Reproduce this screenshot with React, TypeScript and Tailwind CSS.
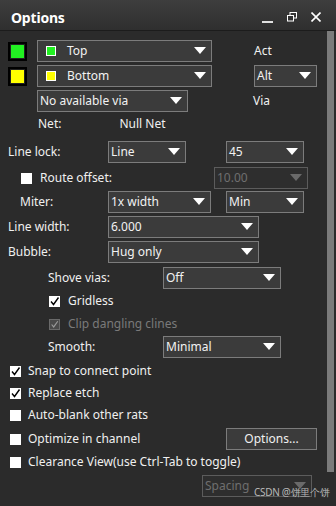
import React from "react";

const font = { fontFamily: '"Noto Sans", "Open Sans", Arial, sans-serif' };

const Arrow = ({ disabled = false }: { disabled?: boolean }) => (
  <svg width="12" height="8" viewBox="0 0 12 8" className="shrink-0">
    <path d="M0 0 L12 0 L6 7 Z" fill={disabled ? "#6a6a6a" : "#ffffff"} />
  </svg>
);

const Select = ({
  label,
  w,
  disabled = false,
  swatch,
}: {
  label: string;
  w: string;
  disabled?: boolean;
  swatch?: string;
}) => (
  <div
    className={`${w} h-[22px] flex items-center justify-between pl-[2px] pr-[5px] border ${
      disabled ? "border-[#5c5c5c] text-[#6e6e6e] bg-[#2e2e2e]" : "border-[#7c7c7c] bg-[#3b3b3b] text-[#f2f2f2]"
    }`}
  >
    <div className="flex items-center">
      {swatch && (
        <div className="w-[10px] h-[10px] border border-white ml-[6px] mr-[11px]" style={{ background: swatch }} />
      )}
      <span>{label}</span>
    </div>
    <Arrow disabled={disabled} />
  </div>
);

const Check = ({ checked = false, disabled = false }: { checked?: boolean; disabled?: boolean }) => (
  <div
    className={`w-[11px] h-[11px] shrink-0 flex items-center justify-center ${
      disabled ? "bg-[#4a4a4a] border border-[#6a6a6a]" : "bg-white"
    }`}
  >
    {checked && (
      <svg width="11" height="11" viewBox="0 0 11 11">
        <path
          d="M2 5.5 L4.5 8.5 L9.5 1.5"
          stroke={disabled ? "#9a9a9a" : "#000"}
          strokeWidth="1.4"
          fill="none"
        />
      </svg>
    )}
  </div>
);

const Swatch = ({ color }: { color: string }) => (
  <div className="w-[19px] h-[19px] border-[2px] border-black bg-[#222] p-px ml-[8px] mr-[10px]">
    <div className="w-full h-full" style={{ background: color }} />
  </div>
);

export default function App() {
  return (
    <div className="w-[336px] h-[506px] bg-[#2b2b2b] text-[12px] text-[#f0f0f0] overflow-hidden flex flex-col" style={font}>
      {/* title bar */}
      <div className="h-[31px] shrink-0 flex items-center justify-between pt-[4px] bg-gradient-to-b from-[#3e3e3e] to-[#2f2f2f] border-b border-[#1c1c1c]">
        <span className="ml-[11px] text-[14px] font-bold text-white tracking-[-0.2px]">Options</span>
        <div className="flex items-center gap-[14px] mr-[15px] text-white">
          <svg width="11" height="12" viewBox="0 0 11 12">
            <rect x="0" y="10" width="11" height="2" fill="#e0e0e0" />
          </svg>
          <svg width="10" height="10" viewBox="0 0 10 10">
            <rect x="3" y="0.5" width="6.5" height="5.5" fill="none" stroke="#fff" />
            <rect x="0.5" y="3.5" width="6" height="5.5" fill="#333" stroke="#fff" />
          </svg>
          <svg width="10" height="10" viewBox="0 0 10 10">
            <path d="M0.5 0.5 L9.5 9.5 M9.5 0.5 L0.5 9.5" stroke="#fff" strokeWidth="1.6" />
          </svg>
        </div>
      </div>

      <div className="flex flex-1">
        <div className="flex-1 flex flex-col pt-[9px]">
          {/* layers */}
          <div className="flex items-center h-[22px]">
            <Swatch color="#22f022" />
            <Select label="Top" w="w-[175px]" swatch="#22f022" />
            <span className="ml-[42px]">Act</span>
          </div>
          <div className="flex items-center h-[22px] mt-[3px]">
            <Swatch color="#ffff00" />
            <Select label="Bottom" w="w-[175px]" swatch="#ffff00" />
            <div className="ml-[42px]">
              <Select label="Alt" w="w-[63px]" />
            </div>
          </div>
          <div className="flex items-center h-[22px] mt-[3px]">
            <div className="ml-[37px]">
              <Select label="No available via" w="w-[151px]" />
            </div>
            <span className="ml-[65px]">Via</span>
          </div>
          <div className="flex items-center h-[20px] mt-[2px]">
            <span className="ml-[38px]">Net:</span>
            <span className="ml-[58px]">Null Net</span>
          </div>

          {/* line lock */}
          <div className="flex items-center h-[22px] mt-[7px]">
            <span className="ml-[8px] w-[100px]">Line lock:</span>
            <Select label="Line" w="w-[78px]" />
            <div className="ml-[40px]">
              <Select label="45" w="w-[78px]" />
            </div>
          </div>
          <div className="flex items-center h-[22px] mt-[4px]">
            <div className="ml-[21px] mr-[8px]">
              <Check />
            </div>
            <span className="w-[174px]">Route offset:</span>
            <Select label="10.00" w="w-[94px]" disabled />
          </div>
          <div className="flex items-center h-[22px] mt-[2px]">
            <span className="ml-[20px] w-[88px]">Miter:</span>
            <Select label="1x width" w="w-[103px]" />
            <div className="ml-[15px]">
              <Select label="Min" w="w-[78px]" />
            </div>
          </div>
          <div className="flex items-center h-[22px] mt-[3px]">
            <span className="ml-[8px] w-[100px]">Line width:</span>
            <Select label="6.000" w="w-[151px]" />
          </div>
          <div className="flex items-center h-[22px] mt-[3px]">
            <span className="ml-[8px] w-[100px]">Bubble:</span>
            <Select label="Hug only" w="w-[151px]" />
          </div>
          <div className="flex items-center h-[22px] mt-[4px]">
            <span className="ml-[48px] w-[115px]">Shove vias:</span>
            <Select label="Off" w="w-[118px]" />
          </div>
          <div className="flex items-center h-[22px] mt-[1px]">
            <div className="ml-[49px] mr-[8px]">
              <Check checked />
            </div>
            <span>Gridless</span>
          </div>
          <div className="flex items-center h-[22px] mt-[1px]">
            <div className="ml-[49px] mr-[8px]">
              <Check checked disabled />
            </div>
            <span className="text-[#7a7a7a]">Clip dangling clines</span>
          </div>
          <div className="flex items-center h-[22px] mt-[1px]">
            <span className="ml-[48px] w-[115px]">Smooth:</span>
            <Select label="Minimal" w="w-[118px]" />
          </div>

          {/* bottom checks */}
          <div className="flex items-center h-[22px] mt-[2px]">
            <div className="ml-[10px] mr-[7px]">
              <Check checked />
            </div>
            <span>Snap to connect point</span>
          </div>
          <div className="flex items-center h-[22px]">
            <div className="ml-[10px] mr-[7px]">
              <Check checked />
            </div>
            <span>Replace etch</span>
          </div>
          <div className="flex items-center h-[22px]">
            <div className="ml-[10px] mr-[7px]">
              <Check />
            </div>
            <span>Auto-blank other rats</span>
          </div>
          <div className="flex items-center h-[22px] mt-[2px]">
            <div className="ml-[10px] mr-[7px]">
              <Check />
            </div>
            <span className="w-[198px]">Optimize in channel</span>
            <div className="w-[91px] h-[22px] border border-[#7c7c7c] bg-[#3b3b3b] flex items-center justify-center">
              Options...
            </div>
          </div>
          <div className="flex items-center h-[22px] mt-[1px]">
            <div className="ml-[10px] mr-[7px]">
              <Check />
            </div>
            <span>Clearance View(use Ctrl-Tab to toggle)</span>
          </div>
          <div className="flex items-center h-[22px] mt-[2px] relative">
            <div className="ml-[202px]">
              <Select label="Spacing" w="w-[110px]" disabled />
            </div>
            <span className="absolute left-[254px] top-[11px] text-[10px] leading-[12px] text-[#b8b8b8] whitespace-nowrap tracking-[-0.3px]">
              CSDN @饼里个饼
            </span>
          </div>
        </div>

        {/* scrollbar */}
        <div className="w-[10px] shrink-0 flex justify-center pr-[2px]">
          <div className="w-[7px] h-[441px] bg-[#7b7b7b]" />
        </div>
      </div>
    </div>
  );
}
